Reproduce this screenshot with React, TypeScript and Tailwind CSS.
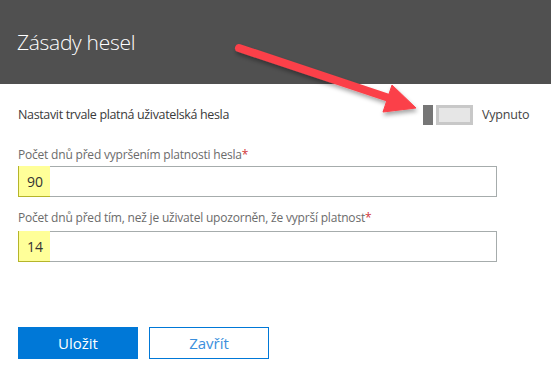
export default function App() {
  return (
    <div className="relative h-[373px] w-[551px] overflow-hidden bg-white font-['Open_Sans',sans-serif]">
      {/* Header */}
      <div className="flex h-[84px] items-center bg-[#505050] pl-[17px] pt-[1px]">
        <h1 className="text-[21px] font-light leading-none tracking-[-0.3px] text-white">Zásady hesel</h1>
      </div>

      <div className="px-[18px]">
        {/* Never-expire toggle */}
        <div className="mt-[21px] flex h-[20px] items-center">
          <span className="w-[405px] text-[12.5px] tracking-[-0.35px] text-[#3a3a3a]">
            Nastavit trvale platná uživatelská hesla
          </span>
          <div className="flex h-[20px] items-center">
            <div className="h-[20px] w-[10px] bg-[#767676]" />
            <div className="ml-[3px] h-[20px] w-[37px] border-[3px] border-[#c8c8c8] bg-[#e6e6e6]" />
            <span className="ml-[9px] text-[12.5px] tracking-[-0.2px] text-[#444]">Vypnuto</span>
          </div>
        </div>

        {/* Expiry days */}
        <label className="mt-[21px] block h-[18px] text-[12px] leading-[18px] tracking-[-0.2px] text-[#6b6b6b]">
          Počet dnů před vypršením platnosti hesla<span className="text-[#d13438]">*</span>
        </label>
        <div className="mt-[2px] flex h-[31px] w-[479px] border border-[#a6acac]">
          <div className="-ml-px -mt-px flex h-[31px] w-[32px] items-center border-b border-l border-[#b5b52a] bg-[#ffff99] pl-[8px] text-[14px] text-[#333]">
            90
          </div>
        </div>

        {/* Notification days */}
        <label className="mt-[12px] block h-[18px] text-[12px] leading-[18px] tracking-[-0.2px] text-[#6b6b6b]">
          Počet dnů před tím, než je uživatel upozorněn, že vyprší platnost<span className="text-[#d13438]">*</span>
        </label>
        <div className="mt-[4px] flex h-[31px] w-[479px] border border-[#a6acac]">
          <div className="-ml-px -mt-px flex h-[31px] w-[32px] items-center border-b border-l border-[#b5b52a] bg-[#ffff99] pl-[8px] text-[14px] text-[#333]">
            14
          </div>
        </div>

        {/* Actions */}
        <div className="mt-[65px] flex gap-[11px]">
          <button className="h-[32px] w-[120px] bg-[#0078d7] text-[15px] text-white">Uložit</button>
          <button className="h-[32px] w-[120px] border border-[#0078d7] bg-white text-[15px] text-[#3b8fdc]">
            Zavřít
          </button>
        </div>
      </div>

      {/* Annotation arrow */}
      <svg className="pointer-events-none absolute left-0 top-0" width="551" height="373" viewBox="0 0 551 373">
        <defs>
          <filter id="sh" x="-20%" y="-20%" width="140%" height="140%">
            <feDropShadow dx="1" dy="3" stdDeviation="2" floodColor="#000" floodOpacity="0.35" />
          </filter>
        </defs>
        <g filter="url(#sh)" fill="#fb4149" stroke="#fb4149">
          <line x1="239" y1="48" x2="392" y2="99" strokeWidth="8" strokeLinecap="round" />
          <polygon points="392,85 416,108 383,112" strokeWidth="1" strokeLinejoin="round" />
        </g>
      </svg>
    </div>
  );
}
